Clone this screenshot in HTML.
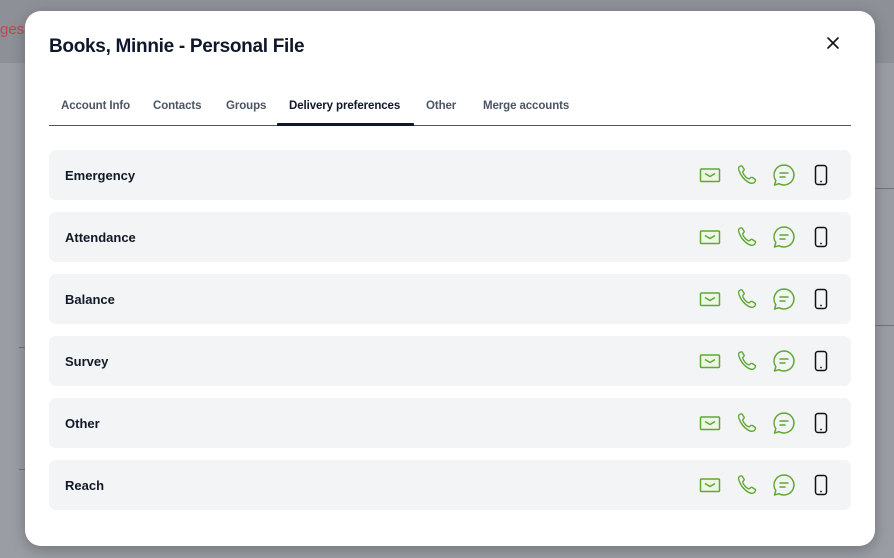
<!DOCTYPE html>
<html><head><meta charset="utf-8"><style>
*{box-sizing:border-box;margin:0;padding:0}
body{width:894px;height:558px;overflow:hidden;position:relative;background:#9a9da4;font-family:"Liberation Sans",sans-serif}
.top{position:absolute;left:0;top:0;width:894px;height:63px;background:#8d9097}
.ln{position:absolute;height:1px;background:#6f737a}
.modal{position:absolute;left:25px;top:11px;width:850px;height:535px;background:#fff;border-radius:16px;box-shadow:0 4px 14px rgba(0,0,0,.25)}
h1{position:absolute;left:24px;top:25px;font-size:19px;font-weight:700;color:#0f172a;letter-spacing:-0.3px}
.x{position:absolute;left:800px;top:24px;width:16px;height:16px}
.tabs{position:absolute;left:24px;top:0;width:802px}
.tabs span{position:absolute;top:89px;font-size:11.5px;font-weight:700;color:#4b5563;letter-spacing:-0.1px}
.tabs .a{color:#0f172a}
.base{position:absolute;left:24px;top:114px;width:802px;height:1px;background:#555}
.ul{position:absolute;left:252px;top:112px;width:137px;height:3px;background:#0f172a;border-radius:1px}
.row{position:absolute;left:24px;width:802px;height:50px;background:#f3f4f6;border-radius:7px}
.row b{position:absolute;left:16px;top:18px;font-size:13px;color:#111827}
.ic{position:absolute;top:13px}
</style></head><body>
<div class="top"></div>
<div class="ln" style="left:875px;top:188px;width:19px"></div>
<div class="ln" style="left:875px;top:325px;width:19px"></div>
<div class="ln" style="left:19px;top:347px;width:6px"></div>
<div class="ln" style="left:19px;top:469px;width:6px"></div>
<div style="position:absolute;left:0;top:21px;font-size:15px;color:#c0474d">ges</div>
<div class="modal">
<h1>Books, Minnie - Personal File</h1>
<svg class="x" viewBox="0 0 16 16"><path d="M3 3L13 13M13 3L3 13" stroke="#111" stroke-width="1.6" stroke-linecap="round"/></svg>
<div class="tabs">
<span style="left:12px">Account Info</span>
<span style="left:104px">Contacts</span>
<span style="left:177px">Groups</span>
<span class="a" style="left:240px">Delivery preferences</span>
<span style="left:377px">Other</span>
<span style="left:434px">Merge accounts</span>
</div>
<div class="base"></div><div class="ul"></div>
<div class="row" style="top:139px"><b>Emergency</b>
<svg class="ic" style="left:650px" width="22" height="24" viewBox="0 0 22 24"><rect x="1.5" y="6" width="19" height="12.5" rx="1" fill="#eef7e6" stroke="#5fa832" stroke-width="1.5"/><path d="M6 10.5l5 3 5-3" fill="none" stroke="#5fa832" stroke-width="1.5"/></svg>
<svg class="ic" style="left:687px" width="22" height="24" viewBox="0 0 22 24"><path d="M3 4c1-1 2-1.5 3-1l2 3c.5 1 0 1.5-1 2.3-.5.5-.3 1.5.8 3.2 1.3 2 2.6 3.3 4 4 1 .5 1.8.3 2.2-.3.7-.8 1.3-1.2 2.3-.7l3 2c.5.6 0 2-1 3-1.5 1.3-4 1-7-1-3-2-5.5-5-7-8S2 5 3 4z" fill="none" stroke="#5fa832" stroke-width="1.4" stroke-linejoin="round"/></svg>
<svg class="ic" style="left:723px" width="24" height="24" viewBox="0 0 24 24"><path d="M12 2a10 10 0 1 1-5 18.7L2.5 22l1.3-4.3A10 10 0 0 1 12 2z" fill="none" stroke="#5fa832" stroke-width="1.5" stroke-linejoin="round"/><path d="M8 10h8M8 14h5" stroke="#5fa832" stroke-width="1.5" stroke-linecap="round"/></svg>
<svg class="ic" style="left:763px" width="18" height="24" viewBox="0 0 18 24"><rect x="3.5" y="2.5" width="11" height="19" rx="2.5" fill="none" stroke="#111" stroke-width="1.5"/><circle cx="9" cy="18.5" r=".9" fill="#111"/></svg>
</div>
</div>
<script>
var m=document.querySelector('.modal'),r=m.querySelector('.row');
var n=['Attendance','Balance','Survey','Other','Reach'];
n.forEach(function(t,i){var c=r.cloneNode(true);c.style.top=(139+62*(i+1))+'px';c.querySelector('b').textContent=t;m.appendChild(c);});
</script>
</body></html>
